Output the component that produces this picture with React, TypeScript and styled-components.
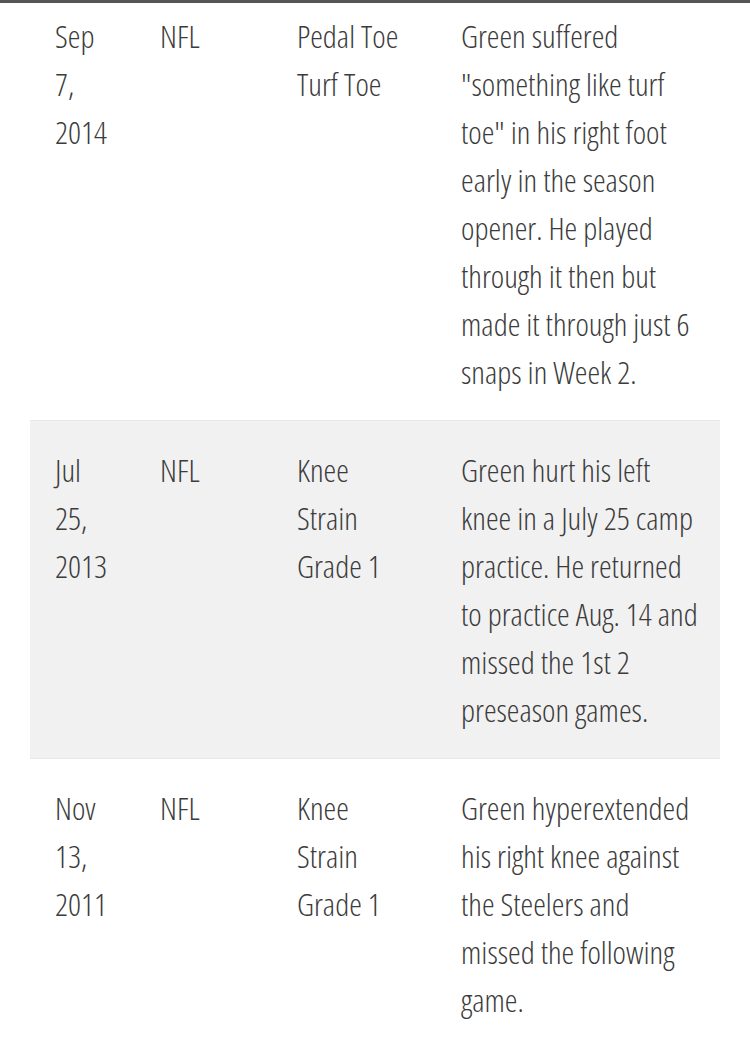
import styled, { createGlobalStyle } from 'styled-components';

type Injury = {
    date: string[],
    league: string,
    injury: string,
    note: string,
};

const injuries: Injury[] = [
    {
        date: ['Sep', '7,', '2014'],
        league: 'NFL',
        injury: 'Pedal Toe Turf Toe',
        note: 'Green suffered "something like turf toe" in his right foot early in the season opener. He played through it then but made it through just 6 snaps in Week 2.',
    },
    {
        date: ['Jul', '25,', '2013'],
        league: 'NFL',
        injury: 'Knee Strain Grade 1',
        note: 'Green hurt his left knee in a July 25 camp practice. He returned to practice Aug. 14 and missed the 1st 2 preseason games.',
    },
    {
        date: ['Nov', '13,', '2011'],
        league: 'NFL',
        injury: 'Knee Strain Grade 1',
        note: 'Green hyperextended his right knee against the Steelers and missed the following game.',
    },
];

const GlobalStyle = createGlobalStyle`
    body {
        margin: 0;
        background: #fff;
        overflow: hidden;
    }
`

function App() {
    return (
        <Page>
            <GlobalStyle />
            <TopEdge />
            <Table>
                <colgroup>
                    <col style={{ width: 105 }} />
                    <col style={{ width: 137 }} />
                    <col style={{ width: 164 }} />
                    <col />
                </colgroup>
                <tbody>
                    {injuries.map((item, i) => (
                        <Row key={i} $shaded={i % 2 === 1}>
                            <Cell>
                                {item.date.map((d) => (
                                    <DatePart key={d}>{d}</DatePart>
                                ))}
                            </Cell>
                            <Cell>{item.league}</Cell>
                            <Cell>{item.injury}</Cell>
                            <Cell $last>{item.note}</Cell>
                        </Row>
                    ))}
                </tbody>
            </Table>
        </Page>
    );
}

export default App;

const Page = styled.div`
    position: relative;
    width: 750px;
    height: 1047px;
    overflow: hidden;
    padding: 0 30px;
    box-sizing: border-box;
`
const TopEdge = styled.div`
    position: absolute;
    top: 0;
    left: 0;
    right: 0;
    height: 3px;
    background-color: #555;
    z-index: 2;
`
const Table = styled.table`
    width: 690px;
    margin-top: -14px;
    border-collapse: collapse;
    table-layout: fixed;
    font-family: "Open Sans", "Liberation Sans", sans-serif;
    font-weight: 300;
    font-stretch: 75%;
    font-size: 32px;
    line-height: 48px;
    color: #3c3c3c;
`
const Row = styled.tr<{ $shaded: boolean }>`
    background-color: ${(p) => (p.$shaded ? '#f1f1f1' : '#fff')};
`
const Cell = styled.td<{ $last?: boolean }>`
    vertical-align: top;
    padding: 25px ${(p) => (p.$last ? '20px' : '25px')} 24px 25px;
    border-top: 1px solid #e8e8e8;
`
const DatePart = styled.span`
    display: block;
`
